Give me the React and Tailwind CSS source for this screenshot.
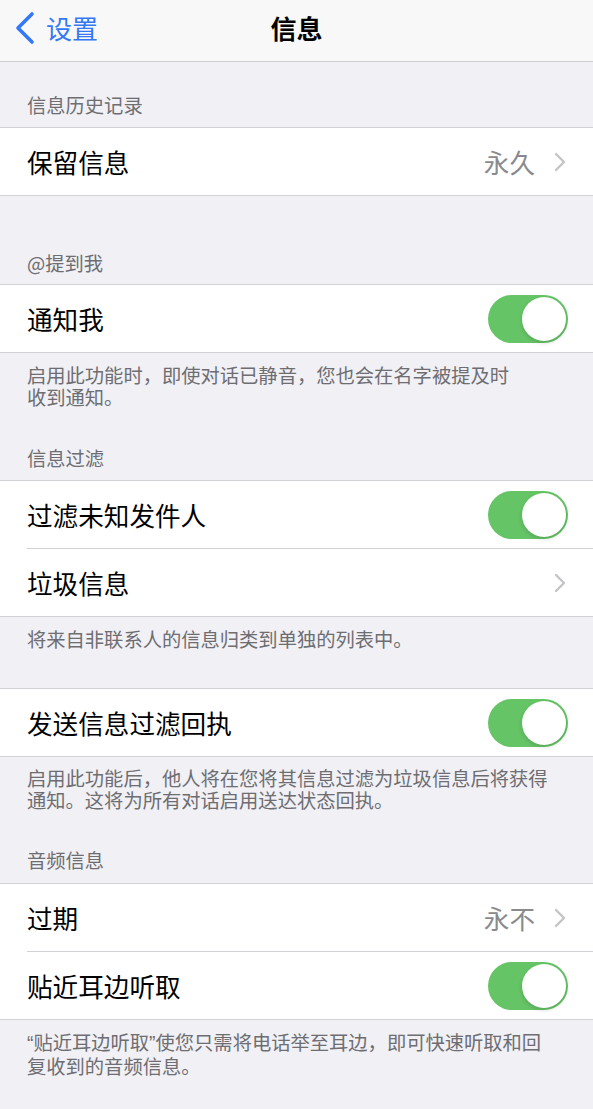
const font = { fontFamily: '"Noto Sans CJK SC", "Noto Sans", sans-serif' };

function Toggle() {
  return (
    <div className="flex h-[48px] w-[80px] items-center justify-end rounded-full bg-[#65c466] p-[2px]">
      <div className="h-[44px] w-[44px] rounded-full bg-white shadow-[0_2px_4px_rgba(0,0,0,0.15)]" />
    </div>
  );
}

function Chevron() {
  return (
    <svg width="12" height="20" viewBox="0 0 12 20" className="shrink-0">
      <path d="M2 2 L10 10 L2 18" fill="none" stroke="#c4c4c8" strokeWidth="2.4" strokeLinecap="round" strokeLinejoin="round" />
    </svg>
  );
}

function Row({ label, value, toggle, link }) {
  return (
    <div className="flex h-[67px] items-center justify-between pl-[27px] pr-[25px]">
      <span className="text-[25.6px] leading-[30px] text-black">{label}</span>
      {toggle && <Toggle />}
      {link && (
        <div className="flex items-center gap-[19px] pr-[2px]">
          {value && <span className="text-[25.6px] leading-[30px] text-[#8a8a8e]">{value}</span>}
          <Chevron />
        </div>
      )}
    </div>
  );
}

function Group({ rows }) {
  return (
    <div className="border-y border-[#d1d1d6] bg-white">
      {rows.map((r, i) => (
        <div key={r.label}>
          {i > 0 && <div className="ml-[27px] h-px bg-[#d1d1d6]" />}
          <Row {...r} />
        </div>
      ))}
    </div>
  );
}

function Header({ children, className }) {
  return (
    <div className={`px-[27px] text-[19.3px] leading-[22px] text-[#6d6d72] ${className}`}>{children}</div>
  );
}

function Footer({ children, className }) {
  return (
    <p className={`whitespace-nowrap pl-[27px] pr-[20px] text-[19.3px] leading-[22px] text-[#6d6d72] ${className}`}>
      {children}
    </p>
  );
}

const quote = 'font-["Liberation_Sans",sans-serif]';

export default function App() {
  return (
    <div className="min-h-screen bg-[#f0f0f5] pb-10" style={font}>
      <div className="relative flex h-[62px] items-center border-b border-[#cfcfd3] bg-[#f8f8f8] pb-[6px]">
        <div className="flex items-center pl-[14px] text-[#3478f6]">
          <svg width="22" height="34" viewBox="0 0 22 34">
            <path d="M18 3 L4 17 L18 31" fill="none" stroke="#3478f6" strokeWidth="3.6" strokeLinecap="round" strokeLinejoin="round" />
          </svg>
          <span className="ml-[10px] text-[26px] leading-[30px]">设置</span>
        </div>
        <div className="pointer-events-none absolute inset-x-0 top-0 flex h-[55px] items-center justify-center">
          <span className="text-[26px] font-bold leading-[30px] text-black">信息</span>
        </div>
      </div>

      <Header className="pt-[32px] pb-[11px]">信息历史记录</Header>
      <Group rows={[{ label: '保留信息', value: '永久', link: true }]} />

      <Header className="pt-[56px] pb-[10px]">@提到我</Header>
      <Group rows={[{ label: '通知我', toggle: true }]} />
      <Footer className="pt-[11px]">
        启用此功能时，即使对话已静音，您也会在名字被提及时
        <br />
        收到通知。
      </Footer>

      <Header className="pt-[39px] pb-[11px]">信息过滤</Header>
      <Group
        rows={[
          { label: '过滤未知发件人', toggle: true },
          { label: '垃圾信息', link: true },
        ]}
      />
      <Footer className="pt-[11px]">将来自非联系人的信息归类到单独的列表中。</Footer>

      <div className="mt-[38px]">
        <Group rows={[{ label: '发送信息过滤回执', toggle: true }]} />
      </div>
      <Footer className="pt-[10px]">
        启用此功能后，他人将在您将其信息过滤为垃圾信息后将获得
        <br />
        通知。这将为所有对话启用送达状态回执。
      </Footer>

      <Header className="pt-[38px] pb-[12px]">音频信息</Header>
      <Group
        rows={[
          { label: '过期', value: '永不', link: true },
          { label: '贴近耳边听取', toggle: true },
        ]}
      />
      <Footer className="pt-[11px]">
        <span className={quote}>“</span>贴近耳边听取<span className={quote}>”</span>使您只需将电话举至耳边，即可快速听取和回
        <br />
        复收到的音频信息。
      </Footer>
    </div>
  );
}
